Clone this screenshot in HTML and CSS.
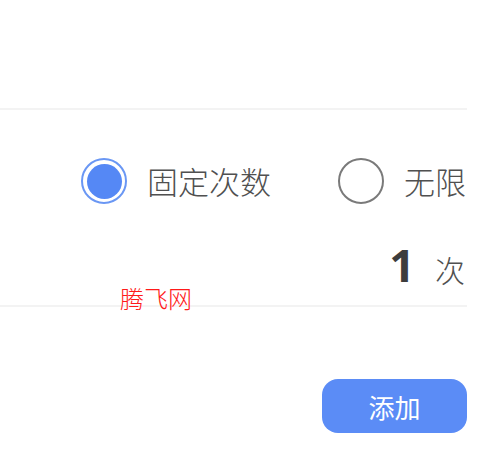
FILE: index.html
```html
<!DOCTYPE html>
<html lang="zh-CN">
<head>
<meta charset="utf-8">
<title>添加</title>
<link rel="stylesheet" href="styles.css">
</head>
<body>
<div class="panel">
  <div class="top"></div>
  <div class="radios">
    <div class="option">
      <span class="radio radio-on"><span class="dot"></span></span>
      <span class="label">固定次数</span>
    </div>
    <div class="option">
      <span class="radio"></span>
      <span class="label">无限</span>
    </div>
  </div>
  <div class="count">
    <span class="num">1</span>
    <span class="unit">次</span>
  </div>
  <div class="actions">
    <button class="btn">添加</button>
  </div>
  <div class="watermark">腾飞网</div>
</div>
</body>
</html>
```
FILE: styles.css
```css
html, body {
  margin: 0;
  padding: 0;
  background: #ffffff;
}
body {
  font-family: "Noto Sans CJK SC", "Noto Sans", sans-serif;
}
.panel {
  position: relative;
  width: 467px;
  height: 454px;
  overflow: hidden;
}
.top {
  height: 108px;
  border-bottom: 2px solid #f3f3f3;
}
.radios {
  height: 142px;
  display: flex;
  align-items: center;
  padding-left: 81px;
  gap: 67px;
  white-space: nowrap;
}
.option {
  display: flex;
  align-items: center;
  gap: 20px;
  flex-shrink: 0;
}
.radio {
  box-sizing: border-box;
  width: 46px;
  height: 46px;
  border-radius: 50%;
  border: 2.5px solid #7a7a7a;
  display: flex;
  align-items: center;
  justify-content: center;
  flex-shrink: 0;
}
.radio-on {
  border-color: #6a97f4;
}
.dot {
  width: 35px;
  height: 35px;
  border-radius: 50%;
  background: #5588f5;
}
.label {
  font-size: 31px;
  line-height: 40px;
  font-weight: 300;
  color: #505050;
}
.count {
  height: 53px;
  border-bottom: 2px solid #f3f3f3;
  display: flex;
  justify-content: flex-end;
  align-items: baseline;
  gap: 20px;
  padding-right: 2px;
}
.num {
  font-family: "Noto Sans", "Noto Sans CJK SC", sans-serif;
  font-weight: 700;
  font-size: 45px;
  line-height: 26px;
  color: #3d3d3d;
}
.unit {
  font-size: 30px;
  line-height: 26px;
  font-weight: 300;
  color: #505050;
}
.actions {
  display: flex;
  justify-content: flex-end;
  margin-top: 72px;
}
.btn {
  width: 145px;
  height: 54px;
  border: none;
  border-radius: 16px;
  background: #5b8cf6;
  color: #ffffff;
  font-family: "Noto Sans CJK SC", sans-serif;
  font-size: 26px;
  padding: 0;
}
.watermark {
  position: absolute;
  left: 120px;
  top: 286px;
  font-size: 24px;
  line-height: 24px;
  font-weight: 300;
  color: #ff1a1a;
}
```
